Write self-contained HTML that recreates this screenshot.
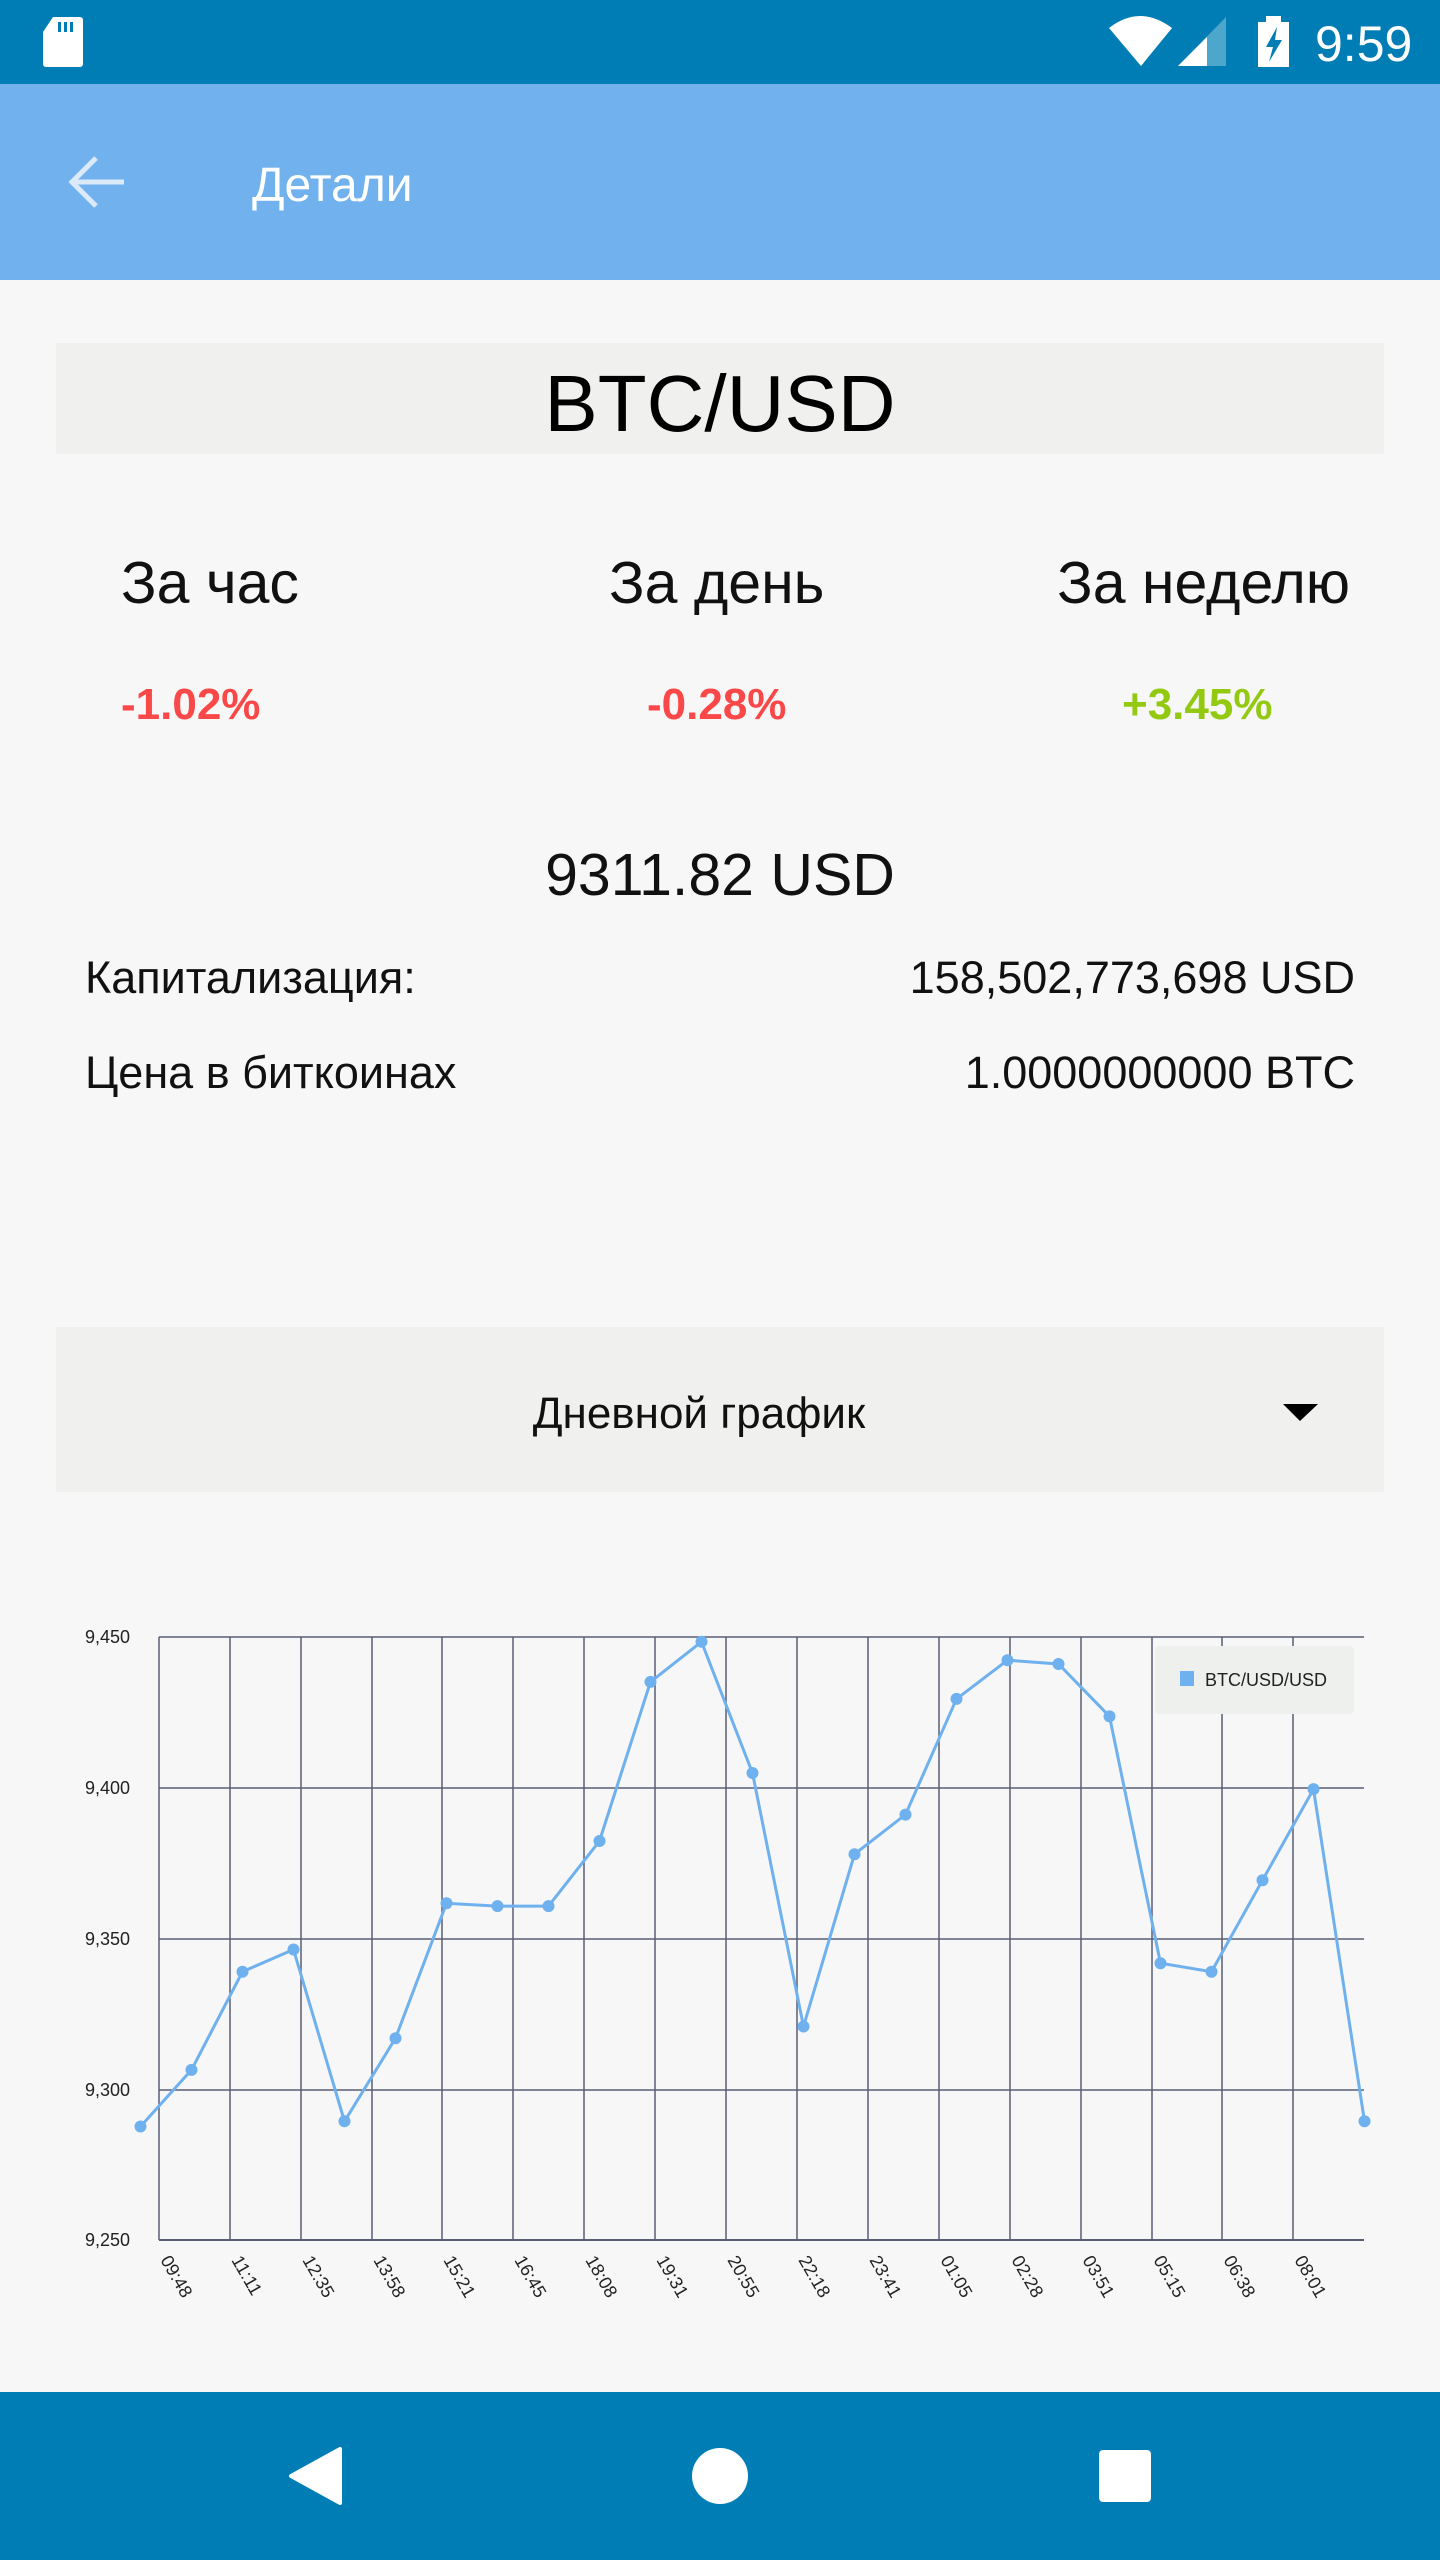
<!DOCTYPE html>
<html><head><meta charset="utf-8"><style>
html,body{margin:0;padding:0;background:#f7f7f7;}
svg{display:block;font-family:"Liberation Sans","Noto Sans CJK SC",sans-serif;}
</style></head><body>
<svg width="1440" height="2560" viewBox="0 0 1440 2560" xmlns="http://www.w3.org/2000/svg">
<rect width="1440" height="2560" fill="#f7f7f7"/>
<!-- status bar -->
<rect x="0" y="0" width="1440" height="84" fill="#017db5"/>
<path d="M53 17 H80 a3 3 0 0 1 3 3 V64 a3 3 0 0 1 -3 3 H46 a3 3 0 0 1 -3 -3 V32 Z" fill="#fff"/>
<rect x="58" y="22" width="3" height="10" fill="#017db5"/><rect x="64" y="22" width="3" height="10" fill="#017db5"/><rect x="70" y="22" width="3" height="10" fill="#017db5"/>
<path d="M1109 28 Q1140 4 1172 28 L1141 66 Z" fill="#fff"/>
<path d="M1178 66 L1226 17 V66 Z" fill="#4da6cc"/>
<path d="M1178 66 L1207 37 V66 Z" fill="#fff"/>
<rect x="1258" y="22" width="31" height="45" fill="#fff"/><rect x="1266" y="16" width="15" height="7" fill="#fff"/>
<path d="M1277 27 L1266 47 H1273 L1269 62 L1282 40 H1275 Z" fill="#017db5"/>
<text x="1315" y="61" font-size="50" fill="#fff">9:59</text>
<!-- toolbar -->
<rect x="0" y="84" width="1440" height="196" fill="#71b2ee"/>
<path d="M124 182 H74 M96 158 L72 182 L96 206" stroke="#dbeaf9" stroke-width="5" fill="none"/>
<text x="252" y="201" font-size="48" fill="#fff">Детали</text>
<!-- title box -->
<rect x="56" y="343" width="1328" height="111" fill="#f0f1ef"/>
<text x="720" y="431" font-size="80" text-anchor="middle" fill="#000">BTC/USD</text>
<text x="121" y="603" font-size="59" fill="#111">За час</text>
<text x="609" y="603" font-size="59" fill="#111">За день</text>
<text x="1350" y="603" font-size="59" text-anchor="end" fill="#111">За неделю</text>
<text x="121" y="719" font-size="44" font-weight="bold" fill="#fa4848">-1.02%</text>
<text x="647" y="719" font-size="44" font-weight="bold" fill="#fa4848">-0.28%</text>
<text x="1122" y="719" font-size="44" font-weight="bold" fill="#94c912">+3.45%</text>
<text x="720" y="895" font-size="59" text-anchor="middle" fill="#111">9311.82 USD</text>
<text x="85" y="993" font-size="45" fill="#111">Капитализация:</text>
<text x="1355" y="993" font-size="45" text-anchor="end" fill="#111">158,502,773,698 USD</text>
<text x="85" y="1088" font-size="45" fill="#111">Цена в биткоинах</text>
<text x="1355" y="1088" font-size="45" text-anchor="end" fill="#111">1.0000000000 BTC</text>
<!-- spinner -->
<rect x="56" y="1327" width="1328" height="165" fill="#f0f1ef"/>
<text x="699" y="1428" font-size="44" text-anchor="middle" fill="#111">Дневной график</text>
<path d="M1283 1404 H1318 L1300 1421 Z" fill="#000"/>
<!-- chart grid -->
<g stroke="#5a5e74" stroke-width="1.5">
<line x1="159" y1="1637" x2="1364" y2="1637"/>
<line x1="159" y1="1788" x2="1364" y2="1788"/>
<line x1="159" y1="1939" x2="1364" y2="1939"/>
<line x1="159" y1="2090" x2="1364" y2="2090"/>
<line x1="159" y1="2240" x2="1364" y2="2240" stroke-width="2"/>
<line x1="159" y1="1637" x2="159" y2="2240"/>
<line x1="230" y1="1637" x2="230" y2="2240"/>
<line x1="301" y1="1637" x2="301" y2="2240"/>
<line x1="372" y1="1637" x2="372" y2="2240"/>
<line x1="442" y1="1637" x2="442" y2="2240"/>
<line x1="513" y1="1637" x2="513" y2="2240"/>
<line x1="584" y1="1637" x2="584" y2="2240"/>
<line x1="655" y1="1637" x2="655" y2="2240"/>
<line x1="726" y1="1637" x2="726" y2="2240"/>
<line x1="797" y1="1637" x2="797" y2="2240"/>
<line x1="868" y1="1637" x2="868" y2="2240"/>
<line x1="939" y1="1637" x2="939" y2="2240"/>
<line x1="1010" y1="1637" x2="1010" y2="2240"/>
<line x1="1081" y1="1637" x2="1081" y2="2240"/>
<line x1="1152" y1="1637" x2="1152" y2="2240"/>
<line x1="1222" y1="1637" x2="1222" y2="2240"/>
<line x1="1293" y1="1637" x2="1293" y2="2240"/>
</g>
<g font-size="18" fill="#222" text-anchor="end">
<text x="130" y="1643">9,450</text>
<text x="130" y="1794">9,400</text>
<text x="130" y="1945">9,350</text>
<text x="130" y="2096">9,300</text>
<text x="130" y="2246">9,250</text>
</g>
<g font-size="18" fill="#222">
<text transform="translate(160,2260) rotate(60)">09:48</text>
<text transform="translate(231,2260) rotate(60)">11:11</text>
<text transform="translate(302,2260) rotate(60)">12:35</text>
<text transform="translate(373,2260) rotate(60)">13:58</text>
<text transform="translate(443,2260) rotate(60)">15:21</text>
<text transform="translate(514,2260) rotate(60)">16:45</text>
<text transform="translate(585,2260) rotate(60)">18:08</text>
<text transform="translate(656,2260) rotate(60)">19:31</text>
<text transform="translate(727,2260) rotate(60)">20:55</text>
<text transform="translate(798,2260) rotate(60)">22:18</text>
<text transform="translate(869,2260) rotate(60)">23:41</text>
<text transform="translate(940,2260) rotate(60)">01:05</text>
<text transform="translate(1011,2260) rotate(60)">02:28</text>
<text transform="translate(1082,2260) rotate(60)">03:51</text>
<text transform="translate(1153,2260) rotate(60)">05:15</text>
<text transform="translate(1223,2260) rotate(60)">06:38</text>
<text transform="translate(1294,2260) rotate(60)">08:01</text>
</g>
<!-- legend -->
<rect x="1155" y="1646" width="199" height="68" rx="4" fill="#eef0ee"/>
<rect x="1180" y="1671" width="14" height="15" fill="#6fb1ee"/>
<text x="1205" y="1686" font-size="18" fill="#222">BTC/USD/USD</text>
<!-- data -->
<polyline fill="none" stroke="#6fb1ee" stroke-width="3" points="140.5,2126.5 191.5,2069.9 242.5,1971.7 293.5,1949.5 344.5,2121.3 395.5,2038.2 446.5,1903.3 497.5,1906.1 548.5,1906.1 599.5,1841 650.5,1681.9 701.5,1641.8 752.5,1773 803.5,2026.5 854.5,1854.2 905.5,1814.6 956.5,1698.9 1007.5,1660.2 1058.5,1664 1109.5,1716.4 1160.5,1963.2 1211.5,1971.7 1262.5,1880.2 1313.5,1789.1 1364.5,2121.3"/>
<g fill="#6fb1ee">
<circle cx="140.5" cy="2126.5" r="6"/><circle cx="191.5" cy="2069.9" r="6"/><circle cx="242.5" cy="1971.7" r="6"/><circle cx="293.5" cy="1949.5" r="6"/><circle cx="344.5" cy="2121.3" r="6"/><circle cx="395.5" cy="2038.2" r="6"/><circle cx="446.5" cy="1903.3" r="6"/><circle cx="497.5" cy="1906.1" r="6"/><circle cx="548.5" cy="1906.1" r="6"/><circle cx="599.5" cy="1841" r="6"/><circle cx="650.5" cy="1681.9" r="6"/><circle cx="701.5" cy="1641.8" r="6"/><circle cx="752.5" cy="1773" r="6"/><circle cx="803.5" cy="2026.5" r="6"/><circle cx="854.5" cy="1854.2" r="6"/><circle cx="905.5" cy="1814.6" r="6"/><circle cx="956.5" cy="1698.9" r="6"/><circle cx="1007.5" cy="1660.2" r="6"/><circle cx="1058.5" cy="1664" r="6"/><circle cx="1109.5" cy="1716.4" r="6"/><circle cx="1160.5" cy="1963.2" r="6"/><circle cx="1211.5" cy="1971.7" r="6"/><circle cx="1262.5" cy="1880.2" r="6"/><circle cx="1313.5" cy="1789.1" r="6"/><circle cx="1364.5" cy="2121.3" r="6"/>
</g>
<!-- nav bar -->
<rect x="0" y="2392" width="1440" height="168" fill="#017db5"/>
<path d="M340 2449 V2503 L291 2476 Z" fill="#fff" stroke="#fff" stroke-width="4" stroke-linejoin="round"/>
<circle cx="720" cy="2476" r="28" fill="#fff"/>
<rect x="1099" y="2450" width="52" height="52" rx="4" fill="#fff"/>
</svg>
</body></html>
